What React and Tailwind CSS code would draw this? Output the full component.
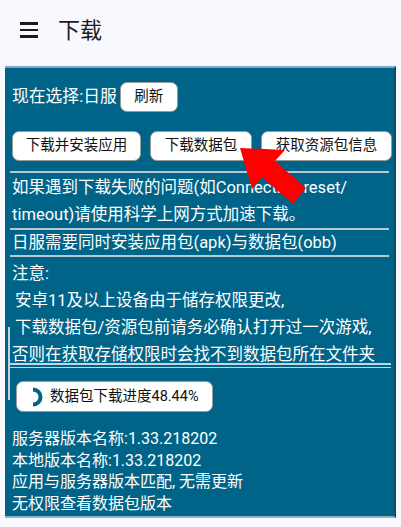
import React from 'react';

const font = { fontFamily: 'Roboto, "Noto Sans CJK SC", sans-serif' };

const Btn = ({ children, className = '' }) => (
  <button
    className={`h-[30px] bg-white rounded-[7px] border border-[#9a9a9a] text-[14.5px] text-[#111] flex items-center justify-center ${className}`}
  >
    {children}
  </button>
);

const Sep = () => <div className="h-[2px] bg-[#b9c7d3] mx-[5px]" />;

export default function App() {
  return (
    <div className="relative w-[401px] h-[527px] bg-[#f8f9fe] overflow-hidden" style={font}>
      {/* Header */}
      <div className="h-[66px] flex items-center pb-[6px]">
        <div className="ml-[20px] w-[18px] flex flex-col gap-[4px]">
          <div className="h-[2.5px] bg-[#1b1b1f]" />
          <div className="h-[2.5px] bg-[#1b1b1f]" />
          <div className="h-[2.5px] bg-[#1b1b1f]" />
        </div>
        <h1 className="ml-[20px] text-[22px] text-[#1b1b1f]">下载</h1>
      </div>

      {/* Panel */}
      <div className="mx-[5px] h-[452px] bg-[#006488] border-t-2 border-t-[#7fa6bd] border-r-2 border-r-[#0a4d66] border-b-2 border-b-[#8fb4c8] text-white pt-[14px]">
        <div className="flex items-center h-[30px] pl-[7px]">
          <span className="text-[16.8px]">现在选择:日服</span>
          <Btn className="ml-[3px] w-[58px]">刷新</Btn>
        </div>

        <div className="flex items-center mt-[19px] pl-[7px] gap-[9px]">
          <Btn className="w-[129px]">下载并安装应用</Btn>
          <Btn className="w-[102px]">下载数据包</Btn>
          <Btn className="w-[131px]">获取资源包信息</Btn>
        </div>

        <div className="mt-[10px]">
          <Sep />
        </div>
        <div className="pl-[7px] text-[16.5px] leading-[27px] pt-[1px]">
          <div>如果遇到下载失败的问题(如Connection reset/</div>
          <div>timeout)请使用科学上网方式加速下载。</div>
        </div>
        <Sep />
        <div className="pl-[7px] text-[16.5px] leading-[25px]">日服需要同时安装应用包(apk)与数据包(obb)</div>
        <Sep />

        <div className="flex">
          <div className="w-[2px] mt-[70px] h-[73px] bg-[#c7d3dd] ml-[3px]" />
          <div className="flex-1">
            <div className="pl-[2px] text-[16.5px] leading-[27px] pt-[3px]">
              <div>注意:</div>
              <div className="pl-[3px]">安卓11及以上设备由于储存权限更改,</div>
              <div className="pl-[3px]">下载数据包/资源包前请务必确认打开过一次游戏,</div>
              <div>否则在获取存储权限时会找不到数据包所在文件夹</div>
            </div>
            <div className="-mt-[5px] mr-[3px] flex flex-col gap-[2px]">
              <div className="h-[1.5px] bg-[#c7d3dd]" />
              <div className="h-[1.5px] bg-[#c7d3dd]" />
            </div>

            <div className="mt-[13px] pl-[6px]">
              <button className="h-[31px] w-[197px] bg-white rounded-[7px] border border-[#9a9a9a] flex items-center pl-[13px] text-[14.5px] text-[#111]">
                <svg width="14" height="20" viewBox="0 0 14 20" className="mr-[6px]">
                  <path d="M3 2.5 A7.5 7.5 0 0 1 3 17.5" fill="none" stroke="#006488" strokeWidth="4" />
                </svg>
                数据包下载进度48.44%
              </button>
            </div>
          </div>
        </div>

        <div className="pl-[7px] text-[16px] leading-[21.7px] mt-[16px]">
          <div>服务器版本名称:1.33.218202</div>
          <div>本地版本名称:1.33.218202</div>
          <div>应用与服务器版本匹配, 无需更新</div>
          <div>无权限查看数据包版本</div>
        </div>
      </div>

      {/* Red arrow overlay */}
      <svg className="absolute left-0 top-0 pointer-events-none" width="401" height="527">
        <polygon
          points="240,148 285,150 275,161 306,188 293,204 262,177 252,189"
          fill="#ff0000"
        />
      </svg>
    </div>
  );
}
